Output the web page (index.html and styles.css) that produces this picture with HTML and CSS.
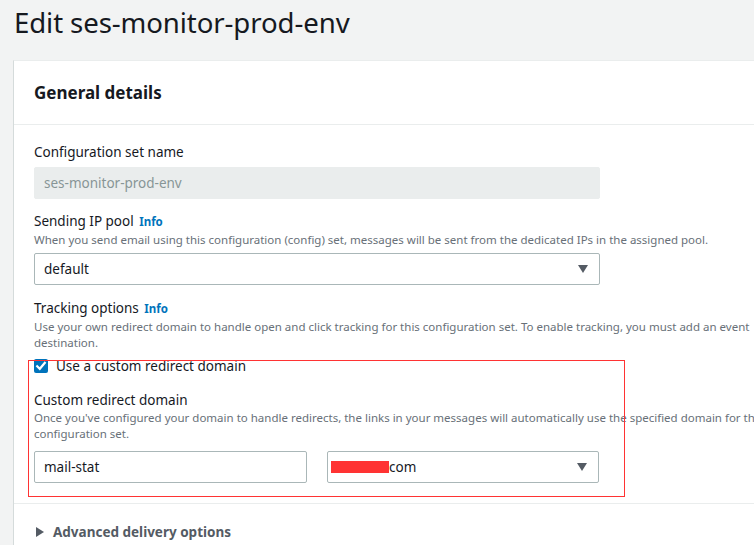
FILE: index.html
```html
<!DOCTYPE html>
<html>
<head>
<meta charset="utf-8">
<link rel="stylesheet" href="styles.css">
</head>
<body>
<div class="page">
  <h1 class="title">Edit ses-monitor-prod-env</h1>
  <div class="card">
    <div class="card-header">General details</div>
    <div class="card-body">
      <div class="field">
        <div class="label">Configuration set name</div>
        <div class="input disabled">ses-monitor-prod-env</div>
      </div>
      <div class="field">
        <div class="label">Sending IP pool <span class="info">Info</span></div>
        <div class="desc">When you send email using this configuration (config) set, messages will be sent from the dedicated IPs in the assigned pool.</div>
        <div class="input select"><span>default</span><span class="caret"></span></div>
      </div>
      <div class="field">
        <div class="label">Tracking options <span class="info">Info</span></div>
        <div class="desc desc-wide">Use your own redirect domain to handle open and click tracking for this configuration set. To enable tracking, you must add an event destination.</div>
        <div class="check-row">
          <span class="checkbox"><svg width="14" height="14" viewBox="0 0 14 14"><path d="M3.2 7.2 L5.8 9.8 L10.8 3.8" fill="none" stroke="#fff" stroke-width="2.2" stroke-linecap="square"/></svg></span>
          <span class="check-label">Use a custom redirect domain</span>
        </div>
        <div class="sub">
          <div class="label">Custom redirect domain</div>
          <div class="desc desc-wide2">Once you've configured your domain to handle redirects, the links in your messages will automatically use the specified domain for this configuration set.</div>
          <div class="split">
            <div class="input half">mail-stat</div>
            <div class="input half select"><span><span class="redact"></span>com</span><span class="caret"></span></div>
          </div>
        </div>
      </div>
    </div>
    <div class="card-footer">
      <span class="tri"></span><span class="adv">Advanced delivery options</span>
    </div>
  </div>
  <div class="annot"></div>
</div>
</body>
</html>
```
FILE: styles.css
```css
html, body {
  margin: 0;
  padding: 0;
  background: #f2f3f3;
  overflow: hidden;
}
body {
  font-family: "Noto Sans", "Open Sans", sans-serif;
  color: #16191f;
  width: 754px;
  height: 545px;
}
.page {
  position: relative;
  padding-left: 13px;
}
.title {
  margin: 0;
  padding: 4px 0 0 1px;
  height: 60px;
  box-sizing: border-box;
  font-size: 27.6px;
  font-weight: 400;
  line-height: 36px;
  letter-spacing: -0.1px;
}
.card {
  width: 900px;
  background: #fff;
  border-left: 1px solid #d5dbdb;
  border-top: 1px solid #eaeded;
  box-sizing: border-box;
}
.card-header {
  height: 63px;
  padding: 0 20px;
  display: flex;
  align-items: center;
  font-size: 17px;
  font-weight: 700;
  border-bottom: 1px solid #eaeded;
}
.card-body {
  padding: 17px 20px 20px 20px;
  border-bottom: 1px solid #eaeded;
}
.field + .field {
  margin-top: 12px;
}
.field:nth-child(3) {
  margin-top: 13px;
}
.label {
  font-size: 13.5px;
  line-height: 20px;
  margin-bottom: 0;
}
.field > .label + .input {
  margin-top: 5px;
}
.info {
  color: #0073bb;
  font-weight: 700;
  font-size: 11.5px;
  margin-left: 2px;
}
.desc {
  font-size: 11.5px;
  line-height: 16px;
  color: #687078;
  margin-bottom: 5px;
}
.desc-wide {
  width: 720px;
}
.desc-wide2 {
  width: 730px;
  margin-top: 0;
  margin-bottom: 9px;
}
.input {
  width: 566px;
  height: 32px;
  box-sizing: border-box;
  border: 1px solid #aab7b8;
  border-radius: 2px;
  padding: 0 9px;
  display: flex;
  align-items: center;
  font-size: 13.5px;
  background: #fff;
}
.input.disabled {
  background: #eaeded;
  border-color: #eaeded;
  color: #879596;
}
.select {
  justify-content: space-between;
}
.caret {
  width: 0;
  height: 0;
  border-left: 5px solid transparent;
  border-right: 5px solid transparent;
  border-top: 8px solid #545b64;
  margin-right: 2px;
}
.field:nth-child(3) .desc-wide {
  margin-bottom: 5px;
}
.check-row {
  display: flex;
  align-items: center;
  height: 20px;
}
.checkbox {
  width: 14px;
  height: 14px;
  background: #0073bb;
  border-radius: 2px;
  display: inline-flex;
  margin-right: 8px;
}
.check-label {
  font-size: 13.5px;
}
.sub {
  margin-top: 14px;
}
.split {
  display: flex;
  gap: 20px;
}
.input.half {
  width: 273px;
}
.input.half.select {
  width: 272px;
  padding-left: 3px;
}
.redact {
  display: inline-block;
  width: 58px;
  height: 12px;
  background: #ff3333;
  vertical-align: -1px;
}
.card-footer {
  height: 56px;
  display: flex;
  align-items: center;
  padding: 0 22px;
}
.tri {
  width: 0;
  height: 0;
  border-top: 5px solid transparent;
  border-bottom: 5px solid transparent;
  border-left: 8px solid #545b64;
  margin-right: 9px;
}
.adv {
  font-size: 13.5px;
  font-weight: 700;
  color: #545b64;
}
.annot {
  position: absolute;
  left: 28px;
  top: 360px;
  width: 597px;
  height: 137px;
  box-sizing: border-box;
  border: 1px solid #ff3333;
  pointer-events: none;
}
```
